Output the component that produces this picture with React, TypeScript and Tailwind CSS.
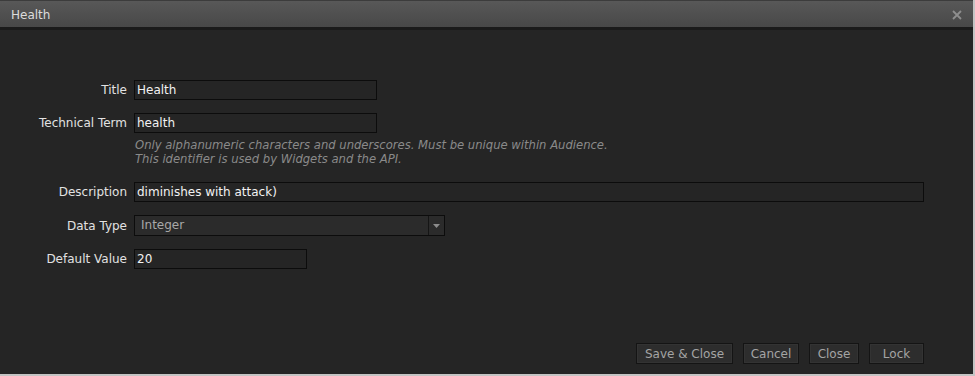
import React from 'react';

const font = { fontFamily: '"DejaVu Sans", Verdana, sans-serif' };

function Row({ label, children, className = '' }: { label: string; children: React.ReactNode; className?: string }) {
  return (
    <div className={`flex items-center ${className}`}>
      <div className="w-[127px] shrink-0 text-right text-[12px] text-[#e2e2e2]">{label}</div>
      <div className="ml-[7px] flex">{children}</div>
    </div>
  );
}

function TextBox({ value, width }: { value: string; width: string }) {
  return (
    <div className={`${width} h-[20px] border border-[#0c0c0c] bg-[#252525] pl-[2px] text-[12px] leading-[18px] text-[#f2f2f2]`}>
      {value}
    </div>
  );
}

export default function App() {
  const buttons = [
    { label: 'Save & Close', width: 'w-[97px]' },
    { label: 'Cancel', width: 'w-[56px]' },
    { label: 'Close', width: 'w-[50px]' },
    { label: 'Lock', width: 'w-[55px]' },
  ];

  return (
    <div className="w-[975px] h-[376px] bg-[#c4c4c4]" style={font}>
      <div className="w-[973px] h-[374px] bg-[#252525] flex flex-col">
        {/* Title bar */}
        <div className="h-[30px] shrink-0 flex items-center justify-between pl-[11px] pr-[11px] border-t border-[#3c3c3c] border-b-[3px] border-b-[#1b1b1b] bg-gradient-to-b from-[#585858] to-[#484848]">
          <span className="text-[12px] text-[#dcdcdc] mt-[1px]">Health</span>
          <svg width="10" height="10" viewBox="0 0 10 10" className="mt-[1px]">
            <path d="M1 1 L9 9 M9 1 L1 9" stroke="#8e8e8e" strokeWidth="1.8" />
          </svg>
        </div>

        {/* Form */}
        <div className="flex-1 flex flex-col pt-[50px] pr-[49px]">
          <Row label="Title">
            <TextBox value="Health" width="w-[243px]" />
          </Row>
          <Row label="Technical Term" className="mt-[13px]">
            <TextBox value="health" width="w-[243px]" />
          </Row>
          <div className="ml-[135px] mt-[5px] text-[11.6px] italic leading-[14px] text-[#8a8a8a]">
            <div>Only alphanumeric characters and underscores. Must be unique within Audience.</div>
            <div>This identifier is used by Widgets and the API.</div>
          </div>
          <Row label="Description" className="mt-[16px]">
            <TextBox value="diminishes with attack)" width="w-[790px]" />
          </Row>
          <Row label="Data Type" className="mt-[13px]">
            <div className="w-[311px] h-[21px] border border-[#0c0c0c] bg-[#2b2b2b] flex">
              <div className="flex-1 pl-[6px] text-[12px] leading-[19px] text-[#a8a8a8]">Integer</div>
              <div className="w-[16px] border-l border-[#151515] flex items-center justify-center">
                <svg width="7" height="4" viewBox="0 0 7 4">
                  <path d="M0 0 L7 0 L3.5 4 Z" fill="#8c8c8c" />
                </svg>
              </div>
            </div>
          </Row>
          <Row label="Default Value" className="mt-[13px]">
            <TextBox value="20" width="w-[173px]" />
          </Row>

          <div className="flex-1" />

          {/* Buttons */}
          <div className="flex justify-end gap-[10px] pb-[10px]">
            {buttons.map((b) => (
              <button
                key={b.label}
                className={`${b.width} h-[21px] whitespace-nowrap border border-[#141414] bg-[#2d2d2d] text-[12px] text-[#a4a4a4] shadow-[inset_0_0_0_1px_#333]`}
              >
                {b.label}
              </button>
            ))}
          </div>
        </div>
      </div>
    </div>
  );
}
